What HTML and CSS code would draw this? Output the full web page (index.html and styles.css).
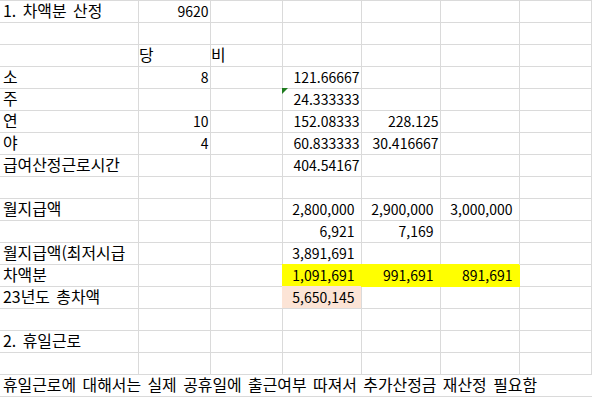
FILE: index.html
```html
<!DOCTYPE html>
<html lang="ko">
<head>
<meta charset="utf-8">
<title>차액분 산정</title>
<link rel="stylesheet" href="styles.css">
</head>
<body>
<div class="sheet">
  <div class="c a k">1. 차액분 산정</div><div class="c n">9620</div><div class="c"></div><div class="c"></div><div class="c"></div><div class="c"></div><div class="c"></div>
  <div class="c a"></div><div class="c"></div><div class="c"></div><div class="c"></div><div class="c"></div><div class="c"></div><div class="c"></div>
  <div class="c a"></div><div class="c k h">당</div><div class="c k h">비</div><div class="c"></div><div class="c"></div><div class="c"></div><div class="c"></div>
  <div class="c a k">소</div><div class="c n">8</div><div class="c"></div><div class="c n">121.66667</div><div class="c"></div><div class="c"></div><div class="c"></div>
  <div class="c a k">주</div><div class="c"></div><div class="c"></div><div class="c n flag">24.333333</div><div class="c"></div><div class="c"></div><div class="c"></div>
  <div class="c a k">연</div><div class="c n">10</div><div class="c"></div><div class="c n">152.08333</div><div class="c n">228.125</div><div class="c"></div><div class="c"></div>
  <div class="c a k">야</div><div class="c n">4</div><div class="c"></div><div class="c n">60.833333</div><div class="c n">30.416667</div><div class="c"></div><div class="c"></div>
  <div class="c a k">급여산정근로시간</div><div class="c"></div><div class="c"></div><div class="c n">404.54167</div><div class="c"></div><div class="c"></div><div class="c"></div>
  <div class="c a"></div><div class="c"></div><div class="c"></div><div class="c"></div><div class="c"></div><div class="c"></div><div class="c"></div>
  <div class="c a k">월지급액</div><div class="c"></div><div class="c"></div><div class="c n acc">2,800,000</div><div class="c n acc">2,900,000</div><div class="c n acc">3,000,000</div><div class="c"></div>
  <div class="c a"></div><div class="c"></div><div class="c"></div><div class="c n acc">6,921</div><div class="c n acc">7,169</div><div class="c"></div><div class="c"></div>
  <div class="c a k">월지급액(최저시급</div><div class="c"></div><div class="c"></div><div class="c n acc">3,891,691</div><div class="c"></div><div class="c"></div><div class="c"></div>
  <div class="c a k">차액분</div><div class="c"></div><div class="c"></div><div class="c n acc yellow">1,091,691</div><div class="c n acc yellow">991,691</div><div class="c n acc yellow">891,691</div><div class="c"></div>
  <div class="c a k">23년도 총차액</div><div class="c"></div><div class="c"></div><div class="c n acc peach">5,650,145</div><div class="c"></div><div class="c"></div><div class="c"></div>
  <div class="c a"></div><div class="c"></div><div class="c"></div><div class="c"></div><div class="c"></div><div class="c"></div><div class="c"></div>
  <div class="c a k">2. 휴일근로</div><div class="c"></div><div class="c"></div><div class="c"></div><div class="c"></div><div class="c"></div><div class="c"></div>
  <div class="c a"></div><div class="c"></div><div class="c"></div><div class="c"></div><div class="c"></div><div class="c"></div><div class="c"></div>
  <div class="c a k note">휴일근로에 대해서는 실제 공휴일에 출근여부 따져서 추가산정금 재산정 필요함</div>
</div>
</body>
</html>
```

FILE: styles.css
```css
html, body {
  margin: 0;
  padding: 0;
  background: #ffffff;
}

.sheet {
  display: grid;
  grid-template-columns: 139px 72px 72px 79px 79px 79px 1fr;
  grid-auto-rows: 22px;
  border-top: 1px solid #dadada;
  font-family: "Noto Sans CJK KR", "Noto Sans", sans-serif;
  font-size: 14px;
  font-weight: 400;
  color: #000000;
}

.c {
  border-right: 1px solid #dadada;
  border-bottom: 1px solid #dadada;
  padding: 0 1.5px 0 1px;
  line-height: 20px;
  white-space: nowrap;
}

.k {
  font-size: 15.9px;
  line-height: 19.5px;
  word-spacing: 2px;
}

.a {
  padding-left: 3px;
}

.h {
  padding-left: 0;
}

.n {
  text-align: right;
}

.acc {
  padding-right: 6.5px;
}

.yellow {
  background: #ffff00;
  border-color: #ffff00;
  box-shadow: -1px -1px 0 0 #ffff00;
}

.peach {
  background: #fce4d6;
  border-bottom-color: #dadada;
  box-shadow: -1px -1px 0 0 #fce4d6;
}

.flag {
  position: relative;
}

.flag::before {
  content: "";
  position: absolute;
  left: -1px;
  top: -1px;
  width: 0;
  height: 0;
  border-top: 6px solid #1e7b1e;
  border-right: 6px solid transparent;
}

.note {
  grid-column: 1 / -1;
  border-right: none;
}
```
